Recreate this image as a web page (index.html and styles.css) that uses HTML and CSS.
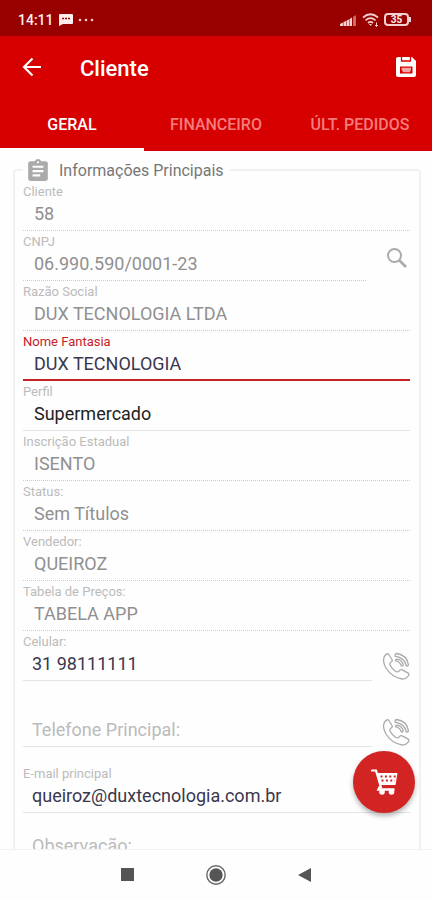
FILE: index.html
```html
<!DOCTYPE html>
<html lang="pt-BR">
<head>
<meta charset="utf-8">
<meta name="viewport" content="width=device-width, initial-scale=1">
<title>Cliente</title>
<link rel="stylesheet" href="styles.css">
</head>
<body>
<div class="status">
  <span class="clock">14:11</span>
  <svg class="chat" width="14" height="12" viewBox="0 0 14 12"><path d="M1 0h12q1 0 1 1v8q0 1-1 1H4l-4 2V1q0-1 1-1z" fill="#ffeded"/><path d="M3 4.500h2M6 4.500h2M9 4.500h2" stroke="#980000" stroke-width="1.600"/></svg>
  <svg width="16" height="4" viewBox="0 0 16 4" fill="#f3c9c9"><circle cx="2" cy="2" r="1.300"/><circle cx="8" cy="2" r="1.300"/><circle cx="14" cy="2" r="1.300"/></svg>
  <svg class="signal" width="17" height="12" viewBox="0 0 17 12"><path d="M0 12v-2l3-1.500V12zM3.500 12V8l2.500-1v5zM6.500 12V6.500l2.500-1V12zM9.500 12V5l2.500-1.500V12z" fill="#f5d0d0"/><path d="M13 12V3l3-2v11z" fill="#c86b6b"/></svg>
  <svg width="17" height="14" viewBox="0 0 17 14" fill="none" stroke="#f5d0d0" stroke-width="1.700"><path d="M1 4.500q7.500-6.500 15 0M3.500 7.300q5-4.300 10 0M6 10q2.500-2.200 5 0"/><path d="M7 11l1.500 2L10 11z" fill="#f5d0d0" stroke="none"/><path d="M14.500 9.500v4M13 12l1.500 1.500L16 12" stroke-width="1"/></svg>
  <span class="battery">35</span>
</div>
<header>
  <div class="bar">
    <button class="icon" aria-label="Voltar"><svg width="20" height="20" viewBox="0 0 20 20" fill="none" stroke="#fff" stroke-width="2.200"><path d="M19 10H3M10.500 1.500L2 10l8.500 8.500"/></svg></button>
    <h1>Cliente</h1>
    <button class="icon" aria-label="Salvar"><svg width="20" height="20" viewBox="0 0 20 20"><path d="M2 0h14l4 4v14q0 2-2 2H2q-2 0-2-2V2q0-2 2-2z" fill="#fff"/><path d="M5.500 0v4h9V0" fill="none" stroke="#d60000" stroke-width="1.300"/><path d="M4 9.500h12.500v7H4z" fill="#d60000"/><path d="M5.500 10.800h9.500v1.500l-1 3h-7l-1.500-3z" fill="#f3a4a4"/></svg></button>
  </div>
  <nav class="tabs">
    <button class="on">GERAL</button>
    <button>FINANCEIRO</button>
    <button>ÚLT. PEDIDOS</button>
  </nav>
</header>
<main>
  <form>
    <fieldset>
      <legend>
        <svg width="22" height="24" viewBox="2 0 20 22" fill="#aaa"><path d="M19 3h-4.180C14.400 1.840 13.300 1 12 1s-2.400.84-2.820 2H5c-1.100 0-2 .9-2 2v14c0 1.100.9 2 2 2h14c1.100 0 2-.9 2-2V5c0-1.100-.9-2-2-2zm-7 0c.55 0 1 .45 1 1s-.45 1-1 1-1-.45-1-1 .45-1 1-1zm2 14H7v-2h7v2zm3-4H7v-2h10v2zm0-4H7V7h10v2z"/></svg>
        <span>Informações Principais</span>
      </legend>
      <div class="field off"><label for="cliente">Cliente</label><input id="cliente" value="58" readonly></div>
      <div class="row">
        <div class="field off"><label for="cnpj">CNPJ</label><input id="cnpj" value="06.990.590/0001-23" readonly></div>
        <button type="button" class="icon side" aria-label="Pesquisar"><svg width="22" height="22" viewBox="0 0 22 22" fill="none" stroke="#aaa" stroke-width="2"><circle cx="8.500" cy="8.500" r="6.500"/><path d="M13 13l7 7" stroke-width="2.600"/></svg></button>
      </div>
      <div class="field off"><label for="razao">Razão Social</label><input id="razao" value="DUX TECNOLOGIA LTDA" readonly></div>
      <div class="field active"><label for="nome">Nome Fantasia</label><input id="nome" value="DUX TECNOLOGIA"></div>
      <div class="field pick"><label for="perfil">Perfil</label><select id="perfil"><option>Supermercado</option></select></div>
      <div class="field off"><label for="ie">Inscrição Estadual</label><input id="ie" value="ISENTO" readonly></div>
      <div class="field off"><label for="st">Status:</label><input id="st" value="Sem Títulos" readonly></div>
      <div class="field off"><label for="vend">Vendedor:</label><input id="vend" value="QUEIROZ" readonly></div>
      <div class="field off"><label for="tab">Tabela de Preços:</label><input id="tab" value="TABELA APP" readonly></div>
      <div class="row call">
        <div class="field edit"><label for="cel">Celular:</label><input id="cel" type="tel" value="31 98111111"></div>
        <button type="button" class="icon side" aria-label="Ligar para o celular"><svg width="28" height="28" viewBox="0 0 28 28" fill="none" stroke="#aaa" stroke-width="1.300" stroke-linejoin="round"><path d="M3 3.500Q5 1 6.500 2L10 7.500q.8 1.500-.8 2.500-2 1-1 3.200 2 4 5.600 6.300 2 1 3.400-.6 1.300-2 3-1l6 3.200q1.500 1.200 0 3-2.500 3.200-6 2.900Q10 25.500 4 16-.5 8 3 3.500z"/><path d="M13 4.200q0-2.400 1.500-2.700Q25 3 26.500 13q-.5 1.500-2.200.8Q23 6 13 4.200zM13.500 8.700q.2-1.700 1.500-1.500 5.500 1 6.200 6-.7 1.300-2 .5-.8-3.500-5.700-5z"/></svg></button>
      </div>
      <div class="row call gap">
        <div class="field edit blank"><label for="tel">Telefone Principal:</label><input id="tel" type="tel" placeholder="Telefone Principal:"></div>
        <button type="button" class="icon side" aria-label="Ligar para o telefone principal"><svg width="28" height="28" viewBox="0 0 28 28" fill="none" stroke="#aaa" stroke-width="1.300" stroke-linejoin="round"><path d="M3 3.500Q5 1 6.500 2L10 7.500q.8 1.500-.8 2.500-2 1-1 3.200 2 4 5.600 6.300 2 1 3.400-.6 1.300-2 3-1l6 3.200q1.500 1.200 0 3-2.500 3.200-6 2.900Q10 25.500 4 16-.5 8 3 3.500z"/><path d="M13 4.200q0-2.400 1.500-2.700Q25 3 26.500 13q-.5 1.500-2.200.8Q23 6 13 4.200zM13.500 8.700q.2-1.700 1.500-1.500 5.500 1 6.200 6-.7 1.300-2 .5-.8-3.500-5.700-5z"/></svg></button>
      </div>
      <div class="field edit gap"><label for="mail">E-mail principal</label><input id="mail" type="email" value="queiroz@duxtecnologia.com.br"></div>
      <div class="field edit blank"><label for="obs">Observação:</label><input id="obs" placeholder="Observação:"></div>
    </fieldset>
  </form>
  <button class="fab" aria-label="Carrinho"><svg width="27" height="26" viewBox="0 0 27 26" fill="none" stroke="#fff"><path d="M1 1.500h4l5 17" stroke-width="2.200" stroke-linecap="round"/><path d="M6 4h20.500l-2 12H9z" fill="#fff" stroke="none"/><path d="M9.500 7.500H25M10.500 11.500H24" stroke="#cf2222" stroke-width="2" stroke-dasharray="2 2.400"/><path d="M9 17.500l-1.500 3h16" stroke-width="2.400"/><circle cx="11" cy="23" r="2.800" fill="#fff" stroke="none"/><circle cx="20.500" cy="23" r="2.800" fill="#fff" stroke="none"/></svg></button>
</main>
<nav class="system">
  <button class="icon" aria-label="Recentes"><svg width="20" height="20" viewBox="0 0 20 20"><path d="M4 3h13v13H4z" fill="#555"/></svg></button>
  <button class="icon" aria-label="Início"><svg width="20" height="20" viewBox="0 0 20 20"><circle cx="10" cy="10" r="9.200" fill="none" stroke="#666" stroke-width="1.400"/><circle cx="10" cy="10" r="6.700" fill="#555"/></svg></button>
  <button class="icon" aria-label="Voltar ao anterior"><svg width="20" height="20" viewBox="0 0 20 20"><path d="M16 3v14L3 10z" fill="#555"/></svg></button>
</nav>
</body>
</html>
```
FILE: styles.css
```css
* {
  box-sizing: border-box;
}

body {
  margin: 0;
  height: 100vh;
  display: flex;
  flex-direction: column;
  background: #fefefe;
  font-family: Roboto, sans-serif;
}

button,
input,
select {
  font: inherit;
  color: inherit;
  background: none;
  border: 0;
  padding: 0;
  margin: 0;
  outline: none;
}

svg {
  display: block;
  flex: none;
}

.icon {
  display: flex;
}

.status {
  height: 36px;
  flex: none;
  display: flex;
  align-items: center;
  gap: 5px;
  padding: 3px 20px 0 18px;
  background: #980000;
  color: #ffeded;
}

.clock {
  font-size: 14px;
  font-weight: 500;
}

.signal {
  margin-left: auto;
}

.battery {
  position: relative;
  width: 25px;
  height: 13px;
  margin-right: 3px;
  border: 2px solid #f5d0d0;
  border-radius: 4px;
  font-size: 10px;
  font-weight: 700;
  line-height: 9px;
  text-align: center;
}

.battery::after {
  content: "";
  position: absolute;
  right: -4px;
  top: 2px;
  width: 2px;
  height: 5px;
  background: #f5d0d0;
}

header {
  flex: none;
  background: #d60000;
  color: #fff;
}

.bar {
  height: 62px;
  display: flex;
  align-items: center;
  padding: 0 16px 0 22px;
}

h1 {
  flex: 1;
  margin: 0 0 0 38px;
  padding-top: 4px;
  font-size: 22px;
  font-weight: 500;
  line-height: 26px;
}

.tabs {
  display: grid;
  grid-template-columns: repeat(3, 1fr);
}

.tabs button {
  height: 53px;
  border-bottom: 3px solid transparent;
  padding-top: 3px;
  font-size: 16px;
  font-weight: 500;
  color: #f47c7c;
}

.tabs .on {
  color: #fff;
  border-bottom-color: #fff;
}

main {
  flex: 1;
  min-height: 0;
  position: relative;
  overflow: hidden;
  padding: 8px 11px 0 13px;
}

fieldset {
  min-width: 0;
  margin: 0;
  padding: 0 9px 24px 8px;
  border: 2px solid #f1f1f1;
  border-radius: 4px;
}

legend {
  display: flex;
  align-items: center;
  gap: 10px;
  height: 22px;
  padding: 0 6px 0 4px;
  font-size: 16px;
  color: #777;
}

.field {
  flex: 1;
  min-width: 0;
  height: 50px;
  border-bottom: 1px solid #e4e4e4;
}

.field label {
  display: block;
  font-size: 13px;
  line-height: 22px;
  color: #bbb;
}

.field input,
.field select {
  display: block;
  width: 100%;
  height: 22px;
  padding-left: 11px;
  font-size: 18px;
  line-height: 22px;
  color: #3a374f;
}

.field select {
  appearance: none;
  color: #222;
}

.off {
  border-bottom: 1px dotted #ccc;
}

.field.off input {
  color: #909090;
}

.active {
  border-bottom: 2px solid #c62228;
}

.field.active label {
  color: #c62228;
}

.field.edit input {
  padding-left: 9px;
}

.field.blank label {
  visibility: hidden;
}

.field.blank input::placeholder {
  color: #bbb;
  opacity: 1;
}

.row {
  display: flex;
  align-items: center;
  gap: 20px;
}

.row.call {
  gap: 10px;
}

.gap {
  margin-top: 16px;
}

.side {
  padding: 4px 2px 0 0;
}

.call .side {
  padding: 20px 0 0;
}

.fab {
  position: absolute;
  right: 17px;
  bottom: 36px;
  display: grid;
  place-items: center;
  width: 62px;
  height: 62px;
  border-radius: 50%;
  background: #d32424;
  box-shadow: 0 3px 5px rgba(0, 0, 0, .3);
}

.system {
  flex: none;
  height: 51px;
  display: flex;
  align-items: center;
  justify-content: center;
  gap: 69px;
  border-top: 1px solid #f2f2f2;
  background: #fefefe;
}
```
